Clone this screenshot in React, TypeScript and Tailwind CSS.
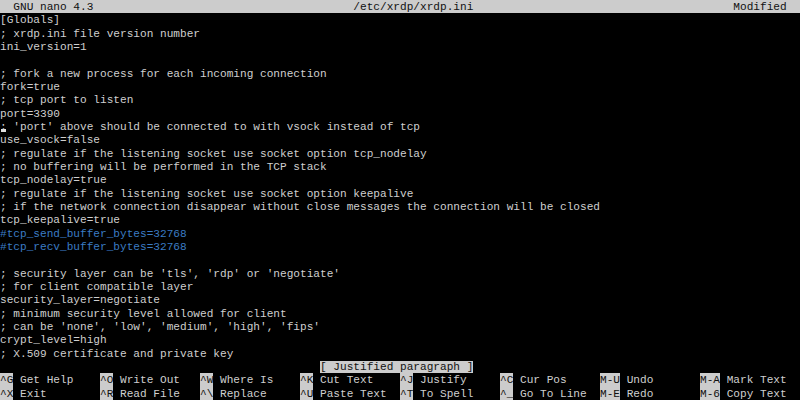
import React from 'react';

const lines: { text: string; blue?: boolean }[] = [
  { text: '[Globals]' },
  { text: '; xrdp.ini file version number' },
  { text: 'ini_version=1' },
  { text: '' },
  { text: '; fork a new process for each incoming connection' },
  { text: 'fork=true' },
  { text: '; tcp port to listen' },
  { text: 'port=3390' },
  { text: "; 'port' above should be connected to with vsock instead of tcp" },
  { text: 'use_vsock=false' },
  { text: '; regulate if the listening socket use socket option tcp_nodelay' },
  { text: '; no buffering will be performed in the TCP stack' },
  { text: 'tcp_nodelay=true' },
  { text: '; regulate if the listening socket use socket option keepalive' },
  { text: '; if the network connection disappear without close messages the connection will be closed' },
  { text: 'tcp_keepalive=true' },
  { text: '#tcp_send_buffer_bytes=32768', blue: true },
  { text: '#tcp_recv_buffer_bytes=32768', blue: true },
  { text: '' },
  { text: "; security layer can be 'tls', 'rdp' or 'negotiate'" },
  { text: '; for client compatible layer' },
  { text: 'security_layer=negotiate' },
  { text: '; minimum security level allowed for client' },
  { text: "; can be 'none', 'low', 'medium', 'high', 'fips'" },
  { text: 'crypt_level=high' },
  { text: '; X.509 certificate and private key' },
];

const shortcuts: [string, string][][] = [
  [['^G', 'Get Help'], ['^O', 'Write Out'], ['^W', 'Where Is'], ['^K', 'Cut Text'], ['^J', 'Justify'], ['^C', 'Cur Pos'], ['M-U', 'Undo'], ['M-A', 'Mark Text']],
  [['^X', 'Exit'], ['^R', 'Read File'], ['^\\', 'Replace'], ['^U', 'Paste Text'], ['^T', 'To Spell'], ['^_', 'Go To Line'], ['M-E', 'Redo'], ['M-6', 'Copy Text']],
];

const row = 'h-[13.333px] leading-[14px] whitespace-pre';

export default function App() {
  return (
    <div className="w-[800px] h-[400px] overflow-hidden bg-black text-[#cfcfcf] text-[11.11px] font-['Liberation_Mono',monospace]">
      {/* title bar */}
      <div className={`${row} flex bg-[#cccccc] text-[#111111]`}>
        <span className="w-[353.33px]">  GNU nano 4.3</span>
        <span className="w-[380px]">/etc/xrdp/xrdp.ini</span>
        <span>Modified</span>
      </div>

      {lines.map((l, i) => (
        <div key={i} className={`${row} ${l.blue ? 'text-[#3b7cc4]' : ''} relative`}>
          {/* cursor */}
          {i === 8 && (
            <span className="absolute left-[1px] top-[9px] w-[5px] h-[3px] bg-[#e0e0e0]" />
          )}
          {l.text}
        </div>
      ))}

      {/* status line */}
      <div className={`${row} pl-[320px]`}>
        <span className="bg-[#cccccc] text-[#111111]">[ Justified paragraph ]</span>
      </div>

      {shortcuts.map((r, ri) => (
        <div key={ri} className={`${row} grid grid-cols-8`}>
          {r.map(([k, label]) => (
            <div key={k} className="flex">
              <span className="bg-[#cccccc] text-[#111111]">{k}</span>
              <span> {label}</span>
            </div>
          ))}
        </div>
      ))}
    </div>
  );
}
